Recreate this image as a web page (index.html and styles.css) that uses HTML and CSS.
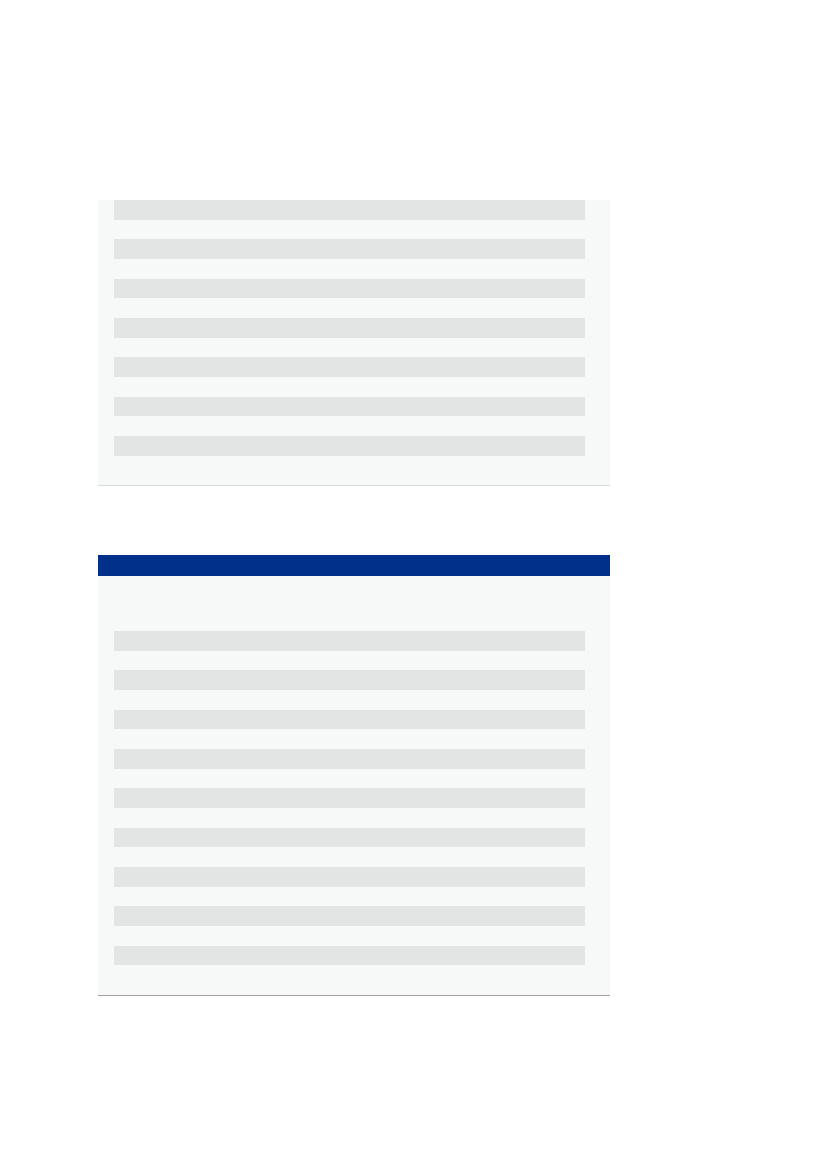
FILE: index.html
```html
<!DOCTYPE html>
<html>
<head>
<meta charset="utf-8">
<link rel="stylesheet" href="styles.css">
</head>
<body>
<div class="page">
  <section class="panel panel-a">
    <div class="rows">
      <div class="bar"></div>
      <div class="bar"></div>
      <div class="bar"></div>
      <div class="bar"></div>
      <div class="bar"></div>
      <div class="bar"></div>
      <div class="bar"></div>
    </div>
  </section>
  <section class="panel panel-b">
    <div class="header"></div>
    <div class="rows rows-b">
      <div class="bar"></div>
      <div class="bar"></div>
      <div class="bar"></div>
      <div class="bar"></div>
      <div class="bar"></div>
      <div class="bar"></div>
      <div class="bar"></div>
      <div class="bar"></div>
      <div class="bar"></div>
    </div>
  </section>
</div>
</body>
</html>
```
FILE: styles.css
```css
html, body {
  margin: 0;
  padding: 0;
  background: #ffffff;
  font-family: "Liberation Sans", Arial, sans-serif;
}
.page {
  display: flex;
  flex-direction: column;
  gap: 69.5px;
  padding: 200px 0 0 98px;
}
.panel {
  width: 512px;
  background: #f7f8f8;
  box-sizing: border-box;
}
.panel-a {
  border-bottom: 1.5px solid #d8d9d9;
}
.panel-b {
  border-bottom: 1.5px solid #a3a3a3;
}
.header {
  height: 21px;
  background: #00308a;
}
.rows {
  display: flex;
  flex-direction: column;
  gap: 19.67px;
  padding: 0 25px 29px 16px;
}
.rows-b {
  padding-top: 55px;
  padding-bottom: 30px;
}
.bar {
  height: 19.67px;
  background: #e3e4e4;
}
```
